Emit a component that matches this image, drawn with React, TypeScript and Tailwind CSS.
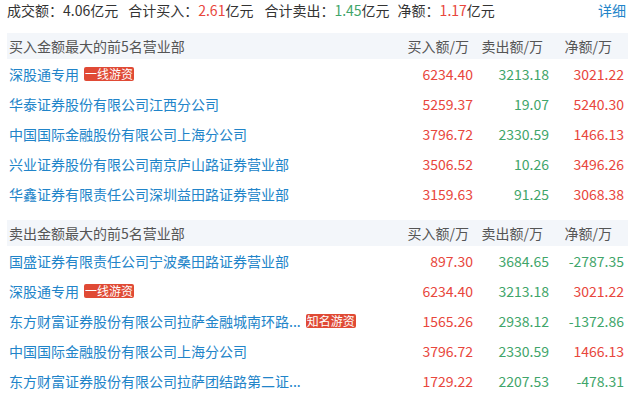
const RED = "text-[#e8463c]";
const GREEN = "text-[#3fa56a]";

type Row = {
  name: string;
  tag?: string;
  buy: string;
  sell: string;
  net: string;
};

const buyTop: Row[] = [
  { name: "深股通专用", tag: "一线游资", buy: "6234.40", sell: "3213.18", net: "3021.22" },
  { name: "华泰证券股份有限公司江西分公司", buy: "5259.37", sell: "19.07", net: "5240.30" },
  { name: "中国国际金融股份有限公司上海分公司", buy: "3796.72", sell: "2330.59", net: "1466.13" },
  { name: "兴业证券股份有限公司南京庐山路证券营业部", buy: "3506.52", sell: "10.26", net: "3496.26" },
  { name: "华鑫证券有限责任公司深圳益田路证券营业部", buy: "3159.63", sell: "91.25", net: "3068.38" },
];

const sellTop: Row[] = [
  { name: "国盛证券有限责任公司宁波桑田路证券营业部", buy: "897.30", sell: "3684.65", net: "-2787.35" },
  { name: "深股通专用", tag: "一线游资", buy: "6234.40", sell: "3213.18", net: "3021.22" },
  { name: "东方财富证券股份有限公司拉萨金融城南环路...", tag: "知名游资", buy: "1565.26", sell: "2938.12", net: "-1372.86" },
  { name: "中国国际金融股份有限公司上海分公司", buy: "3796.72", sell: "2330.59", net: "1466.13" },
  { name: "东方财富证券股份有限公司拉萨团结路第二证...", buy: "1729.22", sell: "2207.53", net: "-478.31" },
];

function Section({ title, rows }: { title: string; rows: Row[] }) {
  return (
    <div>
      <div className="grid h-[26px] grid-cols-[1fr_75px_76px_75px] items-center bg-[#f3f6fa] pl-[2px] pr-[4px] text-[14px] text-[#555]">
        <span>{title}</span>
        <span className="pr-[4px] text-right">买入额/万</span>
        <span className="pr-[6px] text-right">卖出额/万</span>
        <span className="pr-[12px] text-right">净额/万</span>
      </div>
      {rows.map((row, i) => (
        <div
          key={i}
          className="grid h-[30px] grid-cols-[1fr_75px_76px_75px] items-center pl-[2px] pr-[4px] text-[14px]"
        >
          <span className="flex items-center gap-[5px] text-[#2184c9]">
            <span className="whitespace-nowrap">{row.name}</span>
            {row.tag && (
              <span className="rounded-[2px] bg-[#e04a35] px-[1px] text-[12px] leading-[14px] text-white">
                {row.tag}
              </span>
            )}
          </span>
          <span className={`text-right ${RED}`}>{row.buy}</span>
          <span className={`text-right ${GREEN}`}>{row.sell}</span>
          <span className={`text-right ${row.net.startsWith("-") ? GREEN : RED}`}>{row.net}</span>
        </div>
      ))}
    </div>
  );
}

export default function App() {
  return (
    <div
      className="h-[397px] w-[631px] overflow-hidden bg-white pl-[7px] pr-[3px] leading-[20px] text-[#333]"
      style={{ fontFamily: '"Noto Sans CJK SC", "Noto Sans", sans-serif' }}
    >
      <div className="flex h-[20px] items-center text-[14px]">
        <span>
          成交额：4.06亿元
        </span>
        <span className="ml-[10px]">
          合计买入：<span className={RED}>2.61</span>亿元
        </span>
        <span className="ml-[11px]">
          合计卖出：<span className={GREEN}>1.45</span>亿元
        </span>
        <span className="ml-[8px]">
          净额：<span className={RED}>1.17</span>亿元
        </span>
        <span className="ml-auto pr-[2px] text-[#2184c9]">详细</span>
      </div>
      <div className="mt-[13px]">
        <Section title="买入金额最大的前5名营业部" rows={buyTop} />
      </div>
      <div className="mt-[11px]">
        <Section title="卖出金额最大的前5名营业部" rows={sellTop} />
      </div>
    </div>
  );
}
